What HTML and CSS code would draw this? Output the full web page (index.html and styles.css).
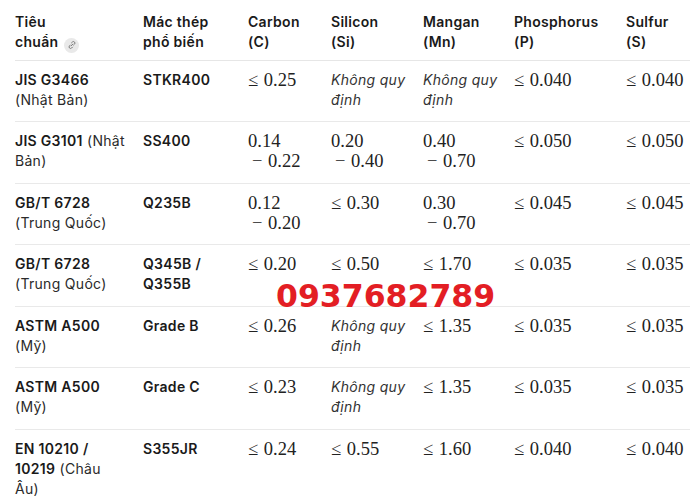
FILE: index.html
```html
<!DOCTYPE html>
<html lang="vi">
<head>
<meta charset="utf-8">
<link rel="stylesheet" href="styles.css">
</head>
<body>
<div class="wrap">
<table class="spec">
<colgroup>
<col class="c1"><col class="c2"><col class="c3"><col class="c4"><col class="c5"><col class="c6"><col class="c7">
</colgroup>
<thead>
<tr>
<th>Tiêu<br>chuẩn <span class="link"><svg viewBox="0 0 16 16" width="10" height="10"><path d="M6.6 9.4 9.4 6.6M7.2 4.6l1.4-1.4a2.4 2.4 0 0 1 3.4 3.4l-1.4 1.4M8.8 11.4l-1.4 1.4a2.4 2.4 0 0 1-3.4-3.4l1.4-1.4" fill="none" stroke="#7d7d7d" stroke-width="1.6" stroke-linecap="round"/></svg></span></th>
<th>Mác thép<br>phổ biến</th>
<th>Carbon<br>(C)</th>
<th>Silicon<br>(Si)</th>
<th>Mangan<br>(Mn)</th>
<th>Phosphorus<br>(P)</th>
<th>Sulfur<br>(S)</th>
</tr>
</thead>
<tbody>
<tr>
<td><b>JIS G3466</b><br>(Nhật Bản)</td>
<td><b>STKR400</b></td>
<td><span class="m">≤ 0.25</span></td>
<td><i>Không quy<br>định</i></td>
<td><i>Không quy<br>định</i></td>
<td><span class="m">≤ 0.040</span></td>
<td><span class="m">≤ 0.040</span></td>
</tr>
<tr>
<td><b>JIS G3101</b> (Nhật<br>Bản)</td>
<td><b>SS400</b></td>
<td><span class="m">0.14<br><span class="ind">− 0.22</span></span></td>
<td><span class="m">0.20<br><span class="ind">− 0.40</span></span></td>
<td><span class="m">0.40<br><span class="ind">− 0.70</span></span></td>
<td><span class="m">≤ 0.050</span></td>
<td><span class="m">≤ 0.050</span></td>
</tr>
<tr>
<td><b>GB/T 6728</b><br>(Trung Quốc)</td>
<td><b>Q235B</b></td>
<td><span class="m">0.12<br><span class="ind">− 0.20</span></span></td>
<td><span class="m">≤ 0.30</span></td>
<td><span class="m">0.30<br><span class="ind">− 0.70</span></span></td>
<td><span class="m">≤ 0.045</span></td>
<td><span class="m">≤ 0.045</span></td>
</tr>
<tr>
<td><b>GB/T 6728</b><br>(Trung Quốc)</td>
<td><b>Q345B /<br>Q355B</b></td>
<td><span class="m">≤ 0.20</span></td>
<td><span class="m">≤ 0.50</span></td>
<td><span class="m">≤ 1.70</span></td>
<td><span class="m">≤ 0.035</span></td>
<td><span class="m">≤ 0.035</span></td>
</tr>
<tr>
<td><b>ASTM A500</b><br>(Mỹ)</td>
<td><b>Grade B</b></td>
<td><span class="m">≤ 0.26</span></td>
<td><i>Không quy<br>định</i></td>
<td><span class="m">≤ 1.35</span></td>
<td><span class="m">≤ 0.035</span></td>
<td><span class="m">≤ 0.035</span></td>
</tr>
<tr>
<td><b>ASTM A500</b><br>(Mỹ)</td>
<td><b>Grade C</b></td>
<td><span class="m">≤ 0.23</span></td>
<td><i>Không quy<br>định</i></td>
<td><span class="m">≤ 1.35</span></td>
<td><span class="m">≤ 0.035</span></td>
<td><span class="m">≤ 0.035</span></td>
</tr>
<tr class="last">
<td><b>EN 10210 /<br>10219</b> (Châu<br>Âu)</td>
<td><b>S355JR</b></td>
<td><span class="m">≤ 0.24</span></td>
<td><span class="m">≤ 0.55</span></td>
<td><span class="m">≤ 1.60</span></td>
<td><span class="m">≤ 0.040</span></td>
<td><span class="m">≤ 0.040</span></td>
</tr>
</tbody>
</table>
<div class="phone">0937682789</div>
</div>
</body>
</html>
```

FILE: styles.css
```css
html, body {
  margin: 0;
  padding: 0;
  background: #ffffff;
  overflow: hidden;
}
body {
  width: 700px;
  height: 500px;
  font-family: Inter, "Noto Sans", sans-serif;
  color: #1f1f1f;
}
.wrap {
  position: relative;
  padding-left: 15px;
}
.spec {
  border-collapse: collapse;
  table-layout: fixed;
  width: 675px;
  font-size: 14px;
  letter-spacing: 0.3px;
  line-height: 20px;
}
.c1 { width: 128px; }
.c2 { width: 105px; }
.c3 { width: 83px; }
.c4 { width: 92px; }
.c5 { width: 91px; }
.c6 { width: 112px; }
.c7 { width: 64px; }
.spec th {
  text-align: left;
  vertical-align: top;
  font-weight: 600;
  padding: 12px 2px 7px 0;
  border-bottom: 1px solid #e6e6e6;
  color: #1a1a1a;
}
.spec td {
  vertical-align: top;
  padding: 9px 2px 11.6px 0;
  border-bottom: 1px solid #e9e9e9;
  color: #2a2a2a;
  white-space: nowrap;
}
.spec tr.last td { border-bottom: none; }
.spec b { font-weight: 600; color: #1a1a1a; }
.spec i { font-style: italic; color: #333; }
.m {
  display: inline-block;
  vertical-align: top;
  font-family: "Liberation Serif", "DejaVu Serif", serif;
  font-size: 18.5px;
  line-height: 20px;
  letter-spacing: 0;
  word-spacing: 1px;
  color: #222;
}
.ind { padding-left: 4px; }
.link {
  display: inline-flex;
  align-items: center;
  justify-content: center;
  width: 15px;
  height: 15px;
  border-radius: 50%;
  background: #e9e9e9;
  vertical-align: -3px;
  margin-left: 2px;
}
.phone {
  position: absolute;
  left: 276px;
  top: 278px;
  font-family: "DejaVu Sans", sans-serif;
  font-weight: bold;
  font-size: 31.5px;
  line-height: 36px;
  color: #e31e24;
  letter-spacing: 0;
}
```
